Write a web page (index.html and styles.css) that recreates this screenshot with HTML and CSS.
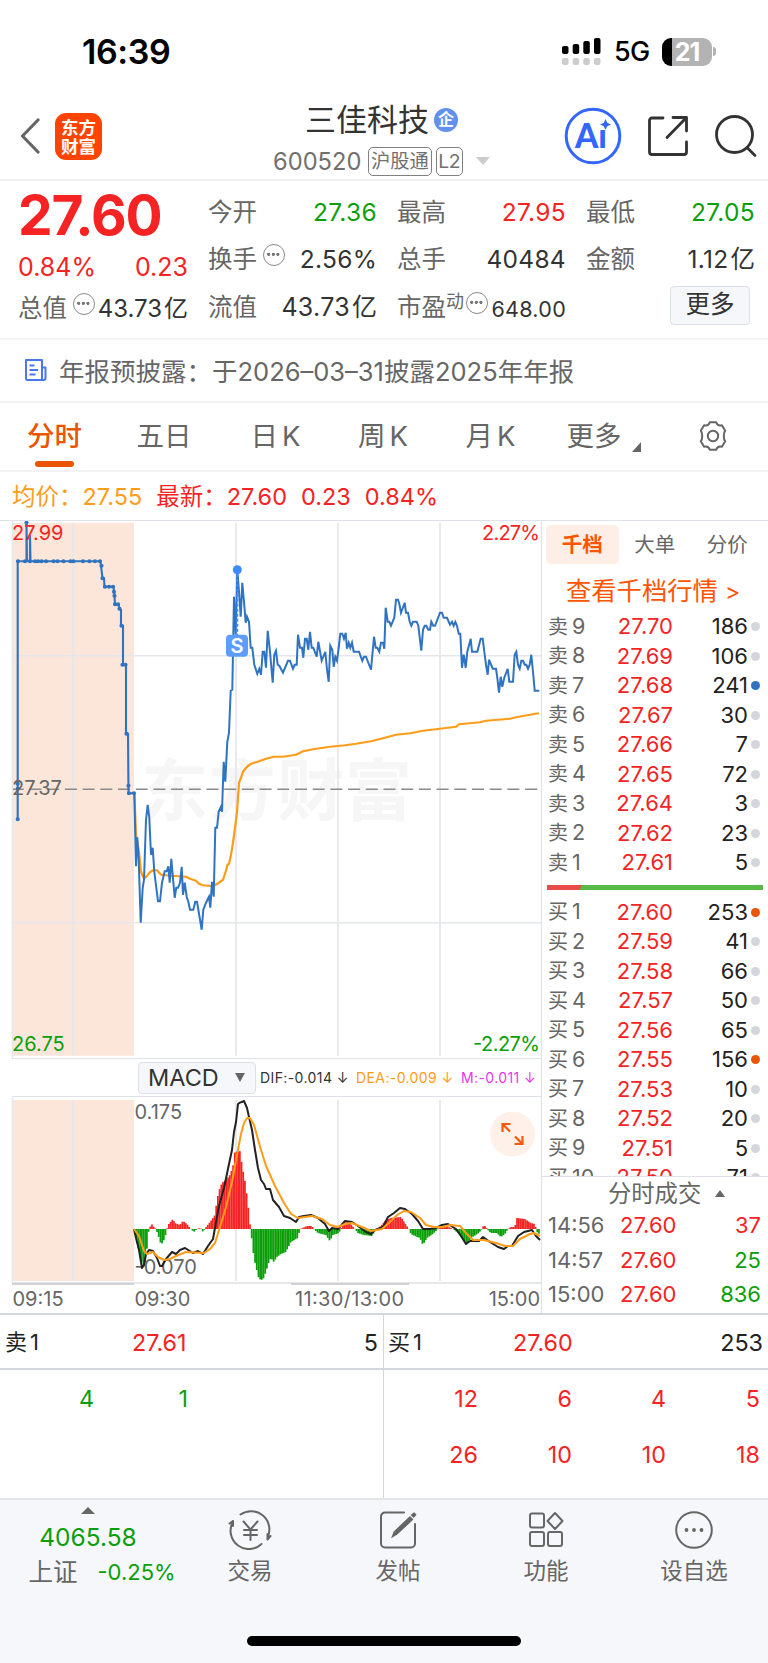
FILE: index.html
```
<!DOCTYPE html>
<html lang="zh-CN">
<head>
  <meta charset="UTF-8">
  <meta name="viewport" content="width=device-width, initial-scale=1.0">
  <title>三佳科技 600520</title>
  <link rel="stylesheet" href="styles.css">
</head>
<body>

  <!-- Status Bar -->
  <div class="status-bar">
    <span class="clock">16:39</span>
    <div class="status-icons">
      <svg class="signal" width="40" height="30" viewBox="0 0 40 30">
        <rect x="0" y="9" width="6.5" height="8" rx="2"/>
        <rect x="10.7" y="7" width="6.5" height="10" rx="2"/>
        <rect x="21.3" y="4" width="6.5" height="13" rx="2"/>
        <rect x="32" y="1" width="6.5" height="16" rx="2"/>
        <g fill="#ccc">
          <rect x="0" y="21" width="6.5" height="7" rx="2"/>
          <rect x="10.7" y="21" width="6.5" height="7" rx="2"/>
          <rect x="21.3" y="21" width="6.5" height="7" rx="2"/>
          <rect x="32" y="21" width="6.5" height="7" rx="2"/>
        </g>
      </svg>
      <span class="network">5G</span>
      <div class="battery">21</div>
      <div class="battery-tip"></div>
    </div>
  </div>

  <!-- Header -->
  <header class="header">
    <div class="header-left">
      <svg class="back" width="20" height="36" viewBox="0 0 20 36"><path d="M18 2 2.5 18 18 34" fill="none" stroke="#666" stroke-width="3.2" stroke-linecap="round" stroke-linejoin="round"/></svg>
      <div class="logo">东方<br>财富</div>
    </div>
    <div class="stock">
      <div class="stock-name">三佳科技<span class="corp">企</span></div>
      <div class="stock-code"><span class="code">600520</span><span class="tag">沪股通</span><span class="tag">L2</span><i class="caret"></i></div>
    </div>
    <div class="header-right">
      <svg width="58" height="58" viewBox="0 0 58 58">
        <circle cx="29" cy="29" r="26.8" fill="none" stroke="#36f" stroke-width="3"/>
        <text class="ai-text" x="11" y="41" textLength="32" lengthAdjust="spacingAndGlyphs">Aı</text>
        <path d="M41.500 12l1.700 3.800 3.800 1.700-3.800 1.700-1.700 3.800-1.700-3.800-3.800-1.700 3.800-1.700z" fill="#36f"/>
      </svg>
      <svg width="42" height="42" viewBox="0 0 42 42" fill="none" stroke="#333" stroke-width="2.800" stroke-linecap="round" stroke-linejoin="round">
        <path d="M16 3H5a2.500 2.500 0 0 0-2.500 2.500V37A2.500 2.500 0 0 0 5 39.500h32A2.500 2.500 0 0 0 39.500 37V27M26 2.500h13.500V16M39 3 20 22.500"/>
      </svg>
      <svg width="44" height="44" viewBox="0 0 44 44" fill="none" stroke="#333" stroke-width="2.800" stroke-linecap="round">
        <circle cx="20.500" cy="20.500" r="18"/><path d="M33 33.500l8 8"/>
      </svg>
    </div>
  </header>

  <!-- Quote -->
  <section class="quote">
    <div class="quote-main">
      <div class="price">27.60</div>
      <div class="change"><span>0.84%</span><span>0.23</span></div>
      <div class="item"><label>总值</label><i class="more-dot"></i><b>43.73<em>亿</em></b></div>
    </div>
    <div class="quote-grid">
      <div class="item"><label>今开</label><b class="green">27.36</b></div>
      <div class="item"><label>最高</label><b class="red">27.95</b></div>
      <div class="item"><label>最低</label><b class="green">27.05</b></div>
      <div class="item"><label>换手</label><i class="more-dot"></i><b>2.56%</b></div>
      <div class="item"><label>总手</label><b>40484</b></div>
      <div class="item"><label>金额</label><b>1.12<em>亿</em></b></div>
      <div class="item"><label>流值</label><b class="wide">43.73<em>亿</em></b></div>
      <div class="item"><label>市盈<sup>动</sup></label><i class="more-dot pe"></i><b class="small">648.00</b></div>
      <div class="item"><span class="more-btn">更多</span></div>
    </div>
  </section>

  <!-- Notice -->
  <div class="notice">
    <svg width="22" height="24" viewBox="0 0 22 24" fill="none" stroke="#4a76ee" stroke-width="2" stroke-linejoin="round">
      <path d="M1 2h16v20H2.500A1.500 1.500 0 0 1 1 20.500zM17 9.500h3.500V20a2 2 0 0 1-2 2H17M4.500 7.500h5M4.500 12h8.500M4.500 16.500h6"/>
    </svg>
    <span>年报预披露：于2026–03–31披露2025年年报</span>
  </div>

  <!-- Period Tabs -->
  <nav class="tabs">
    <a class="active">分时</a>
    <a>五日</a>
    <a>日<u>K</u></a>
    <a>周<u>K</u></a>
    <a>月<u>K</u></a>
    <a>更多<svg width="9" height="10" viewBox="0 0 9 10"><path d="M9 0v10H0z" fill="#666"/></svg></a>
    <svg class="gear" width="32" height="32" viewBox="0 0 32 32" fill="none" stroke="#666" stroke-width="2" stroke-linejoin="round">
      <path d="M12.800 2.200h6.400c.8 2.600 3 3.900 5.700 3.100l3.300 5.500c-1.900 1.900-1.900 8.500 0 10.400l-3.300 5.500c-2.700-.8-4.900.5-5.700 3.100h-6.400c-.8-2.600-3-3.900-5.700-3.100l-3.300-5.500c1.900-1.900 1.900-8.500 0-10.400l3.300-5.500c2.700.8 4.900-.5 5.700-3.100z"/><circle cx="16" cy="16" r="5.200"/>
    </svg>
  </nav>

  <div class="legend">
    <span class="avg">均价：</span><span class="avg num">27.55</span><span>最新：</span><span class="num">27.60</span><span class="num">0.23</span><span class="num">0.84%</span>
  </div>

  <main class="board">
    <!-- Chart Column -->
    <div class="charts">
      <svg class="price-chart" width="542" height="538" viewBox="0 521.5 542 536.5">
        <rect x="13" y="523" width="121" height="533" fill="#fce6da"/>
        <text class="watermark" x="141" y="815" textLength="271">东方财富</text>
        <path d="M12.500 520V1058M73 523V1056M236 523V1056M338 523V1056M440 523V1056M12 656H541M12 923H541" stroke="#e4e7ec" stroke-width="1.700"/>
        <path d="M13 789.500H541" stroke="#8a8a8a" stroke-width="1.700" stroke-dasharray="12 5.700" stroke-dashoffset="1.200"/>
        <polyline fill="none" stroke="#ff9c1a" stroke-width="2.200" stroke-linejoin="round" points="134.500,795 136,835 139,852 141,872 144,879 147,876 150,872.500 153,870.500 157,870.500 161,875 171,876 186,877 190,879 196,881 199,884 203,885.500 213,886.500 218,883.500 223,880 226,871 227.500,865 229,864 231,855 233,843 235,828 237,812 239,783 241,778 243,772 247,767 251,764 259,761.500 266,759 274,757 283,757 296,755 303,751.500 313,749.500 330,747 345,745.500 356,744 371,741.500 385,738 396,735 410,733.500 423,731 440,729 456,727 459,724.500 480,722.500 486,721 510,719 516,717.500 530,715 535,714 539,713.500"/>
        <polyline fill="none" stroke="#2f73c1" stroke-width="2.100" points="17.700,819.500 17.700,561.500 26.500,561.500 26.500,523 27,561.500 30,561.500 30,535 30.500,561.500 100.500,561.500 101,566 102.500,578.500 104,578.500 104.500,587 113.500,587 114.500,596 115,604.500 118.500,604.500 119.500,609 121,610 121,626 123,626 123,665 126,665 126,734 128,734 128.500,793.500 134.500,793.500"/>
        <polyline fill="none" stroke="#2f73c1" stroke-width="2" points="134.300,794 136,866.500 137.300,837.500 138.700,860 140.700,923 142.700,888 144,880 146,820 147.700,805 149.300,818 151,855 152.700,848 154.300,872 158,901.500 160,901.500 162,883 164.700,871.500 166.700,871.500 168.300,866.500 169.700,883 171.300,859 172.700,875 174.700,898 176.300,888 178,888 180,883 181.700,867 183,895 184.700,883 186.700,897 188.300,902 190,910 193.300,910 195.300,902 197,902 201.700,930 203.300,910 206,903 209,897 210.300,908 212,882 213.700,897 215.300,828 217,828 218.700,812 221,807 222,812 223.700,762 225.300,782 227.300,742 229,733 230.700,691 232.300,690 234,597 235.700,635 237.300,570 239,592 240.700,617 242.300,583 244,602 245.700,623 247,617 249,622 250.700,648 252.300,648 254.300,665 257.300,674 259.300,669 261,675 262.700,652 264.300,652 266,668 267.700,631 270,652 272.700,683 274.300,655 276,651 277.700,665 279.300,666 283,673 288,661 290,661 293,669 294.700,665 296.700,665 298,635 300,648 302,648 303.300,658 305,639 306.700,639 308.300,650 310,632 311.700,648 313.300,648 316.700,657 318.300,642 321.700,661 325.300,652 327,670 328.700,682 330.300,646 332.300,650 333.700,667 335.300,657 337,661 338.700,648 340.300,634 342.300,634 344,639 345.700,633 347,649 348.700,643 350.300,648 352,643 353.700,652 359,652 362.300,661 364,657 366,657 371,670 374,637 375.700,648 377.300,648 379.300,652 381,643 383,643 384.300,649 385.700,608 387.700,622 389.300,622 391,626 394.300,618 396,600 398,600 399.300,604 401,613 404.700,603 406,613 408,613 409.700,622 411.300,626 413,622 416.700,622 418.300,626 421.300,651 423,630 424.700,626 426.300,626 428.300,630 430,630 431.300,622 433.300,626 435,626 440,613 442,613 443.700,618 447,618 450,625 452,622 453.700,626 455.300,622 457,626 458.700,634 460.300,634 462,668 463.700,655 465.700,668 467.300,652 470.700,639 472,652 477.300,652 480.700,639 482.700,639 484.300,652 486,665 487.700,675 489,660 492.700,669 496,669 497.300,678 499,693 500.700,677 502.300,687 504.300,678 507.700,669 509.300,682 513,682 514.700,655 516.300,652 518,665 519.700,669 521.300,661 523,661 524.700,665 526.300,665 528,669 529.700,665 531.300,655 533,672 534.700,691 539.300,691"/>
        <path d="M18 561.500h0M25 561.500h0M30 561.500h0M35 561.500h0M38 561.500h0M41.500 561.500h0M46 561.500h0M53.500 561.500h0M57.500 561.500h0M63.500 561.500h0M70.500 561.500h0M73.500 561.500h0M83 561.500h0M89.500 561.500h0M95 561.500h0M100 561.500h0M26.500 523h0M101.500 566h0M102.500 578.500h0M105 587h0M109 587h0M113 587h0M114 592h0M114.500 596h0M115 604.500h0M118 604.500h0M119.500 609h0M121.500 626h0M122.500 665h0M125.500 665h0M126.500 734h0M128.500 786h0M129 793.500h0M134 793.500h0M17.700 819.500h0M17.700 784h0M17.700 789h0" stroke="#2f73c1" stroke-width="4.200" stroke-linecap="round"/>
        <path d="M237.300 574V636" stroke="#3d8bff" stroke-width="2" stroke-dasharray="3 2"/>
        <circle cx="237.300" cy="570" r="4.500" fill="#3d8bff"/>
        <rect x="226" y="635" width="22" height="22" rx="4" fill="#5c9dff"/>
        <text class="sell-mark" x="237" y="653">S</text>
        <text class="axis red" x="12" y="540">27.99</text>
        <text class="axis" x="12" y="795.500">27.37</text>
        <text class="axis green" x="12" y="1051">26.75</text>
        <text class="axis red" x="482" y="540" textLength="58">2.27%</text>
        <text class="axis green" x="473" y="1051" textLength="67">-2.27%</text>
      </svg>

      <div class="indicator">
        <span class="indicator-btn">MACD<svg width="10" height="9" viewBox="0 0 10 9"><path d="M0 0h10L5 9z" fill="#666"/></svg></span>
        <span class="dif">DIF:-0.014 <i>↓</i></span>
        <span class="dea">DEA:-0.009 <i>↓</i></span>
        <span class="m">M:-0.011 <i>↓</i></span>
      </div>

      <svg class="macd-chart" width="542" height="216" viewBox="0 1097 542 216">
        <rect x="13" y="1100" width="121" height="181" fill="#fce6da"/>
        <path d="M12.500 1098V1283M73 1100V1281M236 1100V1281M338 1100V1281M440 1100V1281" stroke="#e4e7ec" stroke-width="1.700"/>
        <path d="M12 1283H541" stroke="#dcdfe5" stroke-width="1.500"/>
        <path d="M12 1284H134M291 1284H409" stroke="#c8c8cc" stroke-width="1.500"/>
        <text class="axis" x="134.500" y="1119">0.175</text>
        <text class="axis" x="134.500" y="1274">-0.070</text>
        <g id="macd-bars"></g>
        <polyline fill="none" stroke="#222" stroke-width="2" stroke-linejoin="round" points="134,1229 136,1238 139,1250 142,1268 144,1265 146,1254 149,1250 153,1251 157,1258 160,1266 162,1266 166,1259 172,1252 176,1254 180,1250 185,1248 193,1253 198,1251 203,1254 208,1246 213,1239 216,1222 219,1206 224,1188 229,1164 232,1150 234,1132 236,1122 238,1104 240,1102.500 242,1102 244,1101 247,1108 249,1117 252,1130 255,1150 258,1168 261,1180 264,1184 266,1189 270,1189 273,1200 279,1207 284,1216 290,1218 296,1222 299,1217 304,1216 311,1215 318,1218 325,1224 329,1231 332,1228 338,1229 345,1221 352,1222 358,1226 366,1232 371,1234 375,1230 383,1227 388,1217 394,1213 400,1208 405,1209 412,1214 418,1221 423,1229 430,1229 436,1228 442,1225 448,1224 456,1229 461,1236 466,1244 470,1241 479,1241 483,1237 490,1242 498,1247 504,1249 508,1246 512,1246 518,1236 524,1232 532,1230 536,1236 540,1240"/>
        <polyline fill="none" stroke="#ff9c1a" stroke-width="2" stroke-linejoin="round" points="134,1229 139,1236 144,1251 147,1254 153,1252 158,1257 164,1260 170,1259 176,1256 186,1252 204,1253 210,1249 215,1243 220,1227 226,1207 232,1182 237,1155 241,1134 244,1123 247,1118 250,1118 254,1125 261,1150 266,1166 275,1186 284,1203 291,1214 298,1218 312,1216 322,1219 330,1225 338,1227 345,1224 352,1223 362,1227 371,1231 382,1229 390,1222 397,1215 404,1211 411,1212 420,1218 426,1225 434,1227 443,1227 450,1225 460,1226 466,1233 473,1240 484,1240 496,1243 505,1246 513,1246 520,1239 530,1234 534,1233 540,1236"/>
        <circle cx="512.500" cy="1134" r="22.500" fill="#fff0e9"/>
        <path d="M502.500 1132v-8h8M503 1124.500l7 7M522.500 1136v8h-8M522 1143.500l-7-7" fill="none" stroke="#f05a0a" stroke-width="2.200"/>
        <text class="axis" x="12.500" y="1306">09:15</text>
        <text class="axis" x="134.500" y="1306">09:30</text>
        <text class="axis" x="295" y="1306" textLength="109">11:30/13:00</text>
        <text class="axis end" x="540" y="1306">15:00</text>
      </svg>
    </div>

    <!-- Order Book -->
    <aside class="book">
      <div class="book-tabs"><a class="active">千档</a><a>大单</a><a>分价</a></div>
      <div class="book-link">查看千档行情 <span>&gt;</span></div>
      <div class="level"><span><em>卖</em>9</span><b>27.70</b><b>186</b><i></i></div>
      <div class="level"><span><em>卖</em>8</span><b>27.69</b><b>106</b><i></i></div>
      <div class="level"><span><em>卖</em>7</span><b>27.68</b><b>241</b><i class="blue"></i></div>
      <div class="level"><span><em>卖</em>6</span><b>27.67</b><b>30</b><i></i></div>
      <div class="level"><span><em>卖</em>5</span><b>27.66</b><b>7</b><i></i></div>
      <div class="level"><span><em>卖</em>4</span><b>27.65</b><b>72</b><i></i></div>
      <div class="level"><span><em>卖</em>3</span><b>27.64</b><b>3</b><i></i></div>
      <div class="level"><span><em>卖</em>2</span><b>27.62</b><b>23</b><i></i></div>
      <div class="level"><span><em>卖</em>1</span><b>27.61</b><b>5</b><i></i></div>
      <div class="ratio"></div>
      <div class="bids">
        <div class="level"><span><em>买</em>1</span><b>27.60</b><b>253</b><i class="orange"></i></div>
        <div class="level"><span><em>买</em>2</span><b>27.59</b><b>41</b><i></i></div>
        <div class="level"><span><em>买</em>3</span><b>27.58</b><b>66</b><i></i></div>
        <div class="level"><span><em>买</em>4</span><b>27.57</b><b>50</b><i></i></div>
        <div class="level"><span><em>买</em>5</span><b>27.56</b><b>65</b><i></i></div>
        <div class="level"><span><em>买</em>6</span><b>27.55</b><b>156</b><i class="orange"></i></div>
        <div class="level"><span><em>买</em>7</span><b>27.53</b><b>10</b><i></i></div>
        <div class="level"><span><em>买</em>8</span><b>27.52</b><b>20</b><i></i></div>
        <div class="level"><span><em>买</em>9</span><b>27.51</b><b>5</b><i></i></div>
        <div class="level"><span><em>买</em>10</span><b>27.50</b><b>71</b><i></i></div>
      </div>
      <div class="trades-title">分时成交<svg width="10" height="7" viewBox="0 0 10 7"><path d="M5 0l5 7H0z" fill="#666"/></svg></div>
      <div class="trade"><span>14:56</span><b>27.60</b><b class="red">37</b></div>
      <div class="trade"><span>14:57</span><b>27.60</b><b class="green">25</b></div>
      <div class="trade"><span>15:00</span><b>27.60</b><b class="green">836</b></div>
    </aside>
  </main>

  <!-- Queue -->
  <section class="queue">
    <div class="queue-side">
      <div class="queue-head"><span>卖<u>1</u></span><b>27.61</b><span>5</span></div>
      <div class="queue-list green"><span>4</span><span>1</span></div>
    </div>
    <div class="queue-side">
      <div class="queue-head"><span>买<u>1</u></span><b>27.60</b><span>253</span></div>
      <div class="queue-list red"><span>12</span><span>6</span><span>4</span><span>5</span><span>26</span><span>10</span><span>10</span><span>18</span></div>
    </div>
  </section>

  <!-- Bottom Bar -->
  <footer class="bottom-bar">
    <div class="index">
      <svg width="14" height="7" viewBox="0 0 14 7"><path d="M7 0l7 7H0z" fill="#666"/></svg>
      <div class="index-value">4065.58</div>
      <div class="index-row"><span>上证</span><b>-0.25%</b></div>
    </div>
    <div class="action">
      <svg width="44" height="40" viewBox="0 0 44 40" fill="none" stroke="#666" stroke-width="2" stroke-linecap="round" stroke-linejoin="round">
        <path d="M12.500 4.500A18.300 18.300 0 0 1 39.500 27.500M39.500 29.500l3-3.500M39.500 29v-5M33.500 34A18.300 18.300 0 0 1 4.800 12M5 11v5M5 11l-3.500 2.500M15.500 11.500l7 8 7-8M22.500 19.500V30M16 20h13M16 25h13"/>
      </svg>
      <span>交易</span>
    </div>
    <div class="action">
      <svg width="40" height="40" viewBox="0 0 40 40" fill="none" stroke="#666" stroke-width="2" stroke-linecap="round">
        <path d="M26 2.500H7A4 4 0 0 0 3 6.500v27a4 4 0 0 0 4 4h26a4 4 0 0 0 4-4V14"/>
        <path d="M36 3.500l1.200 1.200-1.500 1.800-1.600-1.500zM32 7.500l2 2L18.500 24l-3.500 2 1.500-4z" fill="#666"/>
      </svg>
      <span>发帖</span>
    </div>
    <div class="action">
      <svg width="40" height="40" viewBox="0 0 40 40" fill="none" stroke="#666" stroke-width="2" stroke-linejoin="round">
        <rect x="4" y="3.500" width="14" height="14" rx="2"/><rect x="4" y="22" width="14" height="14" rx="2"/><rect x="22" y="22" width="14" height="14" rx="2"/><path d="M29 3l7.500 8-7.500 8-7.500-8z"/>
      </svg>
      <span>功能</span>
    </div>
    <div class="action">
      <svg width="40" height="40" viewBox="0 0 40 40" fill="#666">
        <circle cx="20" cy="20" r="17.800" fill="none" stroke="#666" stroke-width="2"/><circle cx="12.500" cy="20" r="1.900"/><circle cx="20" cy="20" r="1.900"/><circle cx="27.500" cy="20" r="1.900"/>
      </svg>
      <span>设自选</span>
    </div>
    <div class="home-indicator"></div>
  </footer>

  <script>
    // MACD histogram: [x, height] turning points, one bar per minute in between
    const points = [[134,-2],[137,-17],[141,-33],[143,-39],[145,-30],[147,-10],[148,0],[149,0],[150,6],[153,2],[155,0],[157,-5],[160,-15],[162,-14],[165,-5],[166,0],[168,5],[172,10],[174,6],[179,4],[182,8],[186,5],[190,0],[193,-3],[196,0],[199,1],[201,0],[202,-3],[204,0],[206,3],[210,8],[214,14],[216,28],[218,38],[221,46],[226,50],[229,54],[232,62],[234,77],[240,78],[241,62],[243,55],[245,42],[247,25],[248.5,12],[249.5,0],[250.5,0],[251,-15],[254,-33],[258,-50],[262,-51],[265,-43],[268,-33],[270,-29],[273,-33],[276,-28],[280,-25],[285,-23],[290,-13],[297,-9],[299,0],[302,1],[306,3],[311,3],[313,0],[317,-4],[325,-6],[329,-12],[332,-6],[338,-4],[340,0],[342,5],[346,7],[350,5],[354,0],[357,-4],[363,-6],[371,-7],[374,-2],[376,0],[380,3],[384,8],[390,11],[400,12],[404,6],[408,0],[410,-5],[414,-7],[419,-9],[422,-16],[426,-9],[432,-5],[437,0],[442,3],[448,2],[452,0],[456,-3],[461,-8],[466,-16],[470,-9],[478,-4],[481,0],[483,4],[485,2],[487,-1],[490,-4],[496,-4],[500,-8],[504,-5],[507,0],[510,2],[514,2],[516,11],[524,10],[530,6],[534,5],[536,-3],[541,-7]];
    const group = document.getElementById('macd-bars');
    const zero = 1229;
    let k = 0;
    for (let i = 0; i < 240; i++) {
      const x = 134.2 + i * 1.69;
      while (k < points.length - 2 && points[k + 1][0] < x) k++;
      const [x0, h0] = points[k];
      const [x1, h1] = points[k + 1];
      const h = h0 + (h1 - h0) * (x - x0) / (x1 - x0);
      const bar = document.createElementNS('http://www.w3.org/2000/svg', 'rect');
      bar.setAttribute('x', x);
      bar.setAttribute('y', h > 0 ? zero - h : zero);
      bar.setAttribute('width', 1.75);
      bar.setAttribute('height', Math.abs(h));
      bar.setAttribute('fill', h > 0 ? '#f52323' : '#0a9f0a');
      group.appendChild(bar);
    }
  </script>

</body>
</html>
```
FILE: styles.css
```
* {
  margin: 0;
  padding: 0;
  box-sizing: border-box;
}
body {
  width: 768px;
  font-family: Inter, "Noto Sans CJK SC", sans-serif;
  background-color: #fff;
  color: #333;
}
b {
  font-weight: 400;
}
em, i {
  font-style: normal;
}
u {
  text-decoration: none;
}
svg {
  display: block;
  flex-shrink: 0;
}
.red { color: #f52323; fill: #f52323; }
.green { color: #0a9f0a; fill: #0a9f0a; }

/* Status Bar */
.status-bar {
  height: 93px;
  padding: 10px 52px 0 82px;
  display: flex;
  align-items: center;
  justify-content: space-between;
  color: #000;
}
.clock {
  font-size: 34px;
  font-weight: 600;
  letter-spacing: -0.4px;
}
.status-icons {
  display: flex;
  align-items: center;
}
.network {
  margin-left: 12px;
  width: 36px;
  font-size: 27px;
  font-weight: 500;
  letter-spacing: -0.8px;
}
.battery {
  margin-left: 12px;
  width: 50px;
  height: 28px;
  border-radius: 9px;
  background: linear-gradient(90deg, #000 10px, #b3b3b3 10px);
  color: #fff;
  font-size: 25px;
  line-height: 28px;
  font-weight: 700;
  text-align: center;
  letter-spacing: -1px;
}
.battery-tip {
  margin-left: 1px;
  width: 3px;
  height: 9px;
  border-radius: 0 3px 3px 0;
  background: #b3b3b3;
}

/* Header */
.header {
  height: 88px;
  padding: 0 10px 0 20px;
  display: grid;
  grid-template-columns: 240px 1fr 194px;
  border-bottom: 2px solid #f0f0f2;
}
.header-left {
  display: flex;
  align-items: center;
}
.logo {
  margin-left: 15px;
  width: 47px;
  height: 47px;
  padding-top: 5px;
  border-radius: 11px;
  background: #ff4400;
  color: #fff;
  font-size: 17.5px;
  line-height: 19px;
  font-weight: 700;
  text-align: center;
}
.stock {
  padding-top: 8px;
}
.stock-name {
  height: 37px;
  display: flex;
  align-items: center;
  padding-left: 45px;
  font-size: 31px;
  line-height: 37px;
}
.corp {
  margin-left: 5px;
  width: 24px;
  height: 24px;
  border-radius: 50%;
  background: #6191ec;
  color: #fff;
  font-size: 16px;
  line-height: 23px;
  font-weight: 700;
  text-align: center;
}
.stock-code {
  display: flex;
  align-items: center;
  padding-left: 13px;
  margin-top: 8px;
  height: 30px;
  color: #707070;
}
.code {
  width: 94.5px;
  font-size: 23.7px;
}
.tag {
  height: 29px;
  padding: 0 2.5px;
  margin-right: 4px;
  border: 1.5px solid #808080;
  border-radius: 5px;
  font-size: 19.3px;
  line-height: 26px;
}
.tag + .tag {
  width: 27px;
  padding: 0 1px;
  letter-spacing: -0.4px;
}
.caret {
  margin-left: 9px;
  border: 7px solid transparent;
  border-top: 8px solid #ccc;
  border-bottom: 0;
}
.header-right {
  display: flex;
  align-items: center;
  justify-content: space-between;
}
.ai-text {
  font-family: Lato, Inter, sans-serif;
  font-size: 34px;
  font-weight: 900;
  fill: #36f;
}

/* Quote */
.quote {
  height: 159px;
  padding: 0 13px 0 18px;
  display: flex;
  gap: 20px;
  border-bottom: 2px solid #f3f3f5;
}
.quote-main {
  width: 170px;
  color: #f52323;
}
.price {
  height: 68px;
  font-size: 55px;
  line-height: 69px;
  font-weight: 700;
  letter-spacing: -1.2px;
}
.change {
  height: 36px;
  display: flex;
  justify-content: space-between;
  font-size: 25px;
  line-height: 36px;
}
.quote-grid {
  flex: 1;
  padding-top: 8px;
  display: grid;
  grid-template-columns: repeat(3, 1fr);
  grid-auto-rows: 47.3px;
  column-gap: 20px;
}
.item {
  height: 47px;
  display: flex;
  align-items: center;
  color: #666;
  font-size: 24.5px;
  line-height: 47px;
}
.item b {
  margin-left: auto;
  color: #333;
  letter-spacing: 0.3px;
}
.item em {
  margin-left: 2px;
  letter-spacing: 0;
}
.item .red { color: #f52323; }
.item .green { color: #0a9f0a; }
.item b.wide {
  font-size: 25px;
}
.quote-main .item b {
  font-size: 24px;
  letter-spacing: 0;
}
.item b.small {
  font-size: 21.5px;
  padding-top: 4px;
}
.item sup {
  font-size: 18px;
  line-height: 0;
  vertical-align: 8px;
}
.more-dot {
  width: 22px;
  height: 22px;
  margin: 0 0 9px 6px;
  border: 1.7px solid #8a8a8a;
  border-radius: 50%;
  background:
    radial-gradient(circle at 4.7px 9.3px, #777 1.3px, transparent 1.9px),
    radial-gradient(circle at 9.3px 9.3px, #777 1.3px, transparent 1.9px),
    radial-gradient(circle at 13.9px 9.3px, #777 1.3px, transparent 1.9px);
}
.more-dot.pe {
  margin-left: 2px;
}
.more-btn {
  margin: 0 5px 4px auto;
  width: 80px;
  height: 39px;
  border: 1.5px solid #dcdfe6;
  border-radius: 4px;
  background: #f6f7fa;
  color: #333;
  line-height: 35px;
  text-align: center;
}

/* Notice */
.notice {
  height: 63px;
  padding: 0 0 2px 25px;
  display: flex;
  align-items: center;
  gap: 12px;
  border-bottom: 2px solid #f3f3f5;
  color: #666;
  font-size: 25.5px;
}

/* Tabs */
.tabs {
  height: 69px;
  padding: 0 39px 0 27px;
  display: flex;
  border-bottom: 2px solid #f3f3f5;
  color: #666;
  font-size: 27.5px;
  line-height: 66px;
}
.tabs a {
  display: flex;
  width: 107.5px;
}
.tabs a:nth-child(2) {
  width: 114px;
}
.tabs a:nth-child(5) {
  width: 101px;
}
.tabs u {
  margin-left: 4px;
}
.tabs a svg {
  margin: 39px 0 0 10px;
}
.tabs .active {
  position: relative;
  width: 109.5px;
  color: #ea5504;
  font-weight: 500;
}
.tabs .active::after {
  content: "";
  position: absolute;
  left: 8px;
  bottom: 3px;
  width: 39px;
  height: 6px;
  border-radius: 3px;
  background: #ea5504;
}
.gear {
  margin: 17px 0 0 auto;
}

.legend {
  height: 48px;
  padding-left: 12px;
  display: flex;
  color: #f52323;
  font-size: 23.5px;
  line-height: 50px;
}
.legend .num {
  margin-right: 14px;
}
.legend .avg { color: #ff9c1a; }

/* Charts */
.board {
  display: flex;
  height: 793px;
}
.charts {
  width: 542px;
  border-right: 1.5px solid #dfe2e8;
}
.price-chart {
  border-top: 1.5px solid #dfe2e8;
}
.axis {
  font-size: 20px;
  fill: #666;
}
.axis.red { fill: #f52323; }
.axis.green { fill: #0a9f0a; }
.axis.end { text-anchor: end; }
.watermark {
  font-size: 67px;
  font-weight: 700;
  fill: #f6f6f6;
}
.sell-mark {
  font-size: 20px;
  font-weight: 600;
  fill: #fff;
  text-anchor: middle;
}
.indicator {
  height: 39px;
  margin-left: 12px;
  padding-left: 126px;
  display: flex;
  align-items: center;
  border-top: 1.5px solid #dfe2e8;
  border-bottom: 1.5px solid #dfe2e8;
  font-size: 14px;
  letter-spacing: 0.4px;
}
.indicator-btn {
  width: 118px;
  height: 32px;
  margin-right: 4px;
  padding: 0 10px 0 9px;
  display: flex;
  align-items: center;
  justify-content: space-between;
  border: 1.5px solid #dcdfe6;
  border-radius: 4px;
  background: #f6f7fa;
  font-size: 23.5px;
  letter-spacing: 0;
}
.dif { width: 96px; }
.dea { width: 105px; color: #ff9c1a; }
.m { color: #e935e9; }
.indicator span {
  white-space: nowrap;
}

/* Order Book */
.book {
  width: 226px;
  border-top: 1.5px solid #dfe2e8;
  color: #666;
}
.book-tabs {
  display: flex;
  padding: 4px 0 0 4px;
}
.book-tabs a {
  width: 72.5px;
  height: 39px;
  font-size: 20.5px;
  line-height: 39px;
  text-align: center;
}
.book-tabs .active {
  border-radius: 5px;
  background: #ffeee6;
  color: #ff5500;
  font-weight: 700;
}
.book-link {
  height: 47.5px;
  padding-left: 24px;
  color: #ff5500;
  font-size: 25.3px;
  line-height: 53px;
}
.book-link span {
  font-size: 23px;
}
.level {
  height: 29.5px;
  padding: 0 8px 0 6px;
  display: grid;
  grid-template-columns: 47px 78px 75px 1fr;
  align-items: center;
  font-size: 22px;
  line-height: 29px;
}
.level em {
  margin-right: 4px;
  font-size: 20px;
}
.level span {
  font-size: 21.5px;
  white-space: nowrap;
}
.level b {
  text-align: right;
  color: #f52323;
}
.level b + b {
  color: #222;
}
.level i {
  justify-self: end;
  width: 9px;
  height: 9px;
  border-radius: 50%;
  background: #d3d6dc;
}
.level i.blue { background: #2f73c1; }
.level i.orange { background: #ea5504; }
.ratio {
  margin: 8px 5px 7px 5px;
  height: 5px;
  background: linear-gradient(120deg, #e94b4b 30px, #58b947 30.5px);
}
.bids {
  height: 279px;
  overflow: hidden;
}
.trades-title {
  height: 33px;
  padding-left: 66px;
  display: flex;
  align-items: center;
  gap: 14px;
  border-top: 1.5px solid #dfe2e8;
  font-size: 23.3px;
  line-height: 31px;
}
.trade {
  height: 34.5px;
  padding: 0 7px 0 6px;
  display: grid;
  grid-template-columns: 72px 60px 1fr;
  font-size: 22px;
  line-height: 33px;
}
.trade b {
  color: #f52323;
}
.trade b:last-child {
  text-align: right;
}
.trade .green {
  color: #0a9f0a;
}

/* Queue */
.queue {
  display: flex;
  height: 185px;
  border-top: 2px solid #d4d7de;
}
.queue-side {
  width: 383px;
}
.queue-side + .queue-side {
  width: 385px;
  border-left: 1.5px solid #d4d7de;
}
.queue-head {
  height: 55px;
  padding: 0 5px 0 5px;
  display: grid;
  grid-template-columns: 127px 1fr auto;
  border-bottom: 2px solid #d4d7de;
  font-size: 23.3px;
  line-height: 55px;
  color: #222;
}
.queue-side + .queue-side .queue-head {
  grid-template-columns: 125px 1fr auto;
  padding-left: 4px;
}
.queue-head span:first-child {
  font-size: 22px;
}
.queue-head u {
  margin-left: 3px;
}
.queue-head b {
  color: #f52323;
}
.queue-list {
  display: grid;
  grid-template-columns: repeat(4, 94px);
  grid-auto-rows: 56px;
  font-size: 23.3px;
  line-height: 58px;
  text-align: right;
}

/* Bottom Bar */
.bottom-bar {
  height: 165px;
  display: grid;
  grid-template-columns: 176px repeat(4, 148px);
  grid-template-rows: 136px auto;
  border-top: 2px solid #e3e5e9;
  background: #f6f7fa;
  color: #666;
}
.index {
  padding-top: 7px;
  display: flex;
  flex-direction: column;
  align-items: center;
}
.index-value {
  color: #0a9f0a;
  font-size: 24.5px;
  line-height: 46px;
}
.index-row {
  padding-left: 29px;
  width: 177px;
  display: flex;
  font-size: 24.5px;
  line-height: 24px;
}
.index-row b {
  margin-left: 20px;
  color: #0a9f0a;
  font-size: 22px;
}
.action {
  padding-top: 10px;
  display: flex;
  flex-direction: column;
  align-items: center;
  font-size: 22.5px;
  line-height: 42px;
}
.home-indicator {
  grid-column: 1 / -1;
  margin-left: 247px;
  width: 274px;
  height: 10px;
  border-radius: 5px;
  background: #000;
}
```
